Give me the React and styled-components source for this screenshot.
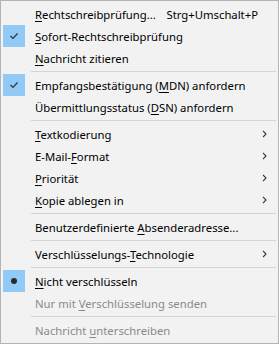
import React from 'react'
import styled, {createGlobalStyle} from 'styled-components'

const GlobalStyle = createGlobalStyle`
    html, body {
        margin: 0;
        padding: 0;
        background: #f2f2f2;
    }
`;

const Menu = styled.div`
    box-sizing: border-box;
    width: 279px;
    height: 344px;
    padding: 2px;
    background: #f2f2f2;
    border: 1px solid #b4b4b4;
    font-family: "Noto Sans", "Liberation Sans", sans-serif;
    font-size: 11.3px;
    color: #000;
    display: flex;
    flex-direction: column;
`;

const Row = styled.div`
    display: flex;
    align-items: center;
    height: 22px;
    color: ${p => p.$disabled ? '#8a8a8a' : '#000'};
    white-space: nowrap;
`;

const IconBox = styled.div`
    width: 22px;
    height: 22px;
    flex: none;
    display: flex;
    align-items: center;
    justify-content: center;
    background: ${p => p.$on ? '#91c9f7' : 'transparent'};
    margin-right: 10px;
`;

const Label = styled.span`
    flex: 1;
    u {
        text-decoration-thickness: 1px;
        text-underline-offset: 2px;
    }
`;

const Shortcut = styled.span`
    padding-right: 18px;
`;

const Arrow = styled.span`
    width: 5px;
    display: flex;
    margin-right: 9px;
`;

const Separator = styled.div`
    height: 5px;
    display: flex;
    align-items: center;
    margin-left: 28px;

    &::after {
        content: '';
        flex: 1;
        height: 1px;
        background: #d4d4d4;
    }
`;

const Dot = styled.span`
    width: 6px;
    height: 6px;
    border-radius: 50%;
    background: #2b2b2b;
`;

const Check = () => (
    <svg width="10" height="8" viewBox="0 0 10 8">
        <path d="M1.5 4 L4 6.5 L8.5 1.5" fill="none" stroke="#333" strokeWidth="1.2"/>
    </svg>
)

const Chevron = () => (
    <svg width="5" height="8" viewBox="0 0 5 8">
        <path d="M1 0.8 L4 4 L1 7.2" fill="none" stroke="#333" strokeWidth="1.1"/>
    </svg>
)

// '&' marks the access key, as in the Windows menu source
const renderLabel = (text) => {
    const i = text.indexOf('&')
    if (i < 0) return text
    return (
        <>
            {text.slice(0, i)}
            <u>{text[i + 1]}</u>
            {text.slice(i + 2)}
        </>
    )
}

const items = [
    {label: '&Rechtschreibprüfung...', shortcut: 'Strg+Umschalt+P'},
    {label: '&Sofort-Rechtschreibprüfung', icon: 'check'},
    {label: '&Nachricht zitieren'},
    'sep',
    {label: 'Empfangsbestätigung (&MDN) anfordern', icon: 'check'},
    {label: 'Übermittlungsstatus (&DSN) anfordern'},
    'sep',
    {label: '&Textkodierung', sub: true},
    {label: 'E-Mail-&Format', sub: true},
    {label: '&Priorität', sub: true},
    {label: '&Kopie ablegen in', sub: true},
    'sep',
    {label: 'Benutzerdefinierte &Absenderadresse...'},
    'sep',
    {label: 'Verschlüsselungs-&Technologie', sub: true},
    'sep',
    {label: '&Nicht verschlüsseln', icon: 'dot'},
    {label: 'Nur mit &Verschlüsselung senden', disabled: true},
    'sep',
    {label: 'Nachricht &unterschreiben', disabled: true},
]

const App = () => {
    return (
        <>
            <GlobalStyle/>
            <Menu>
                {
                    items.map((it, i) => it === 'sep' ? (
                        <Separator key={i}/>
                    ) : (
                        <Row key={i} $disabled={it.disabled}>
                            <IconBox $on={!!it.icon}>
                                {it.icon === 'check' && <Check/>}
                                {it.icon === 'dot' && <Dot/>}
                            </IconBox>
                            <Label>{renderLabel(it.label)}</Label>
                            {it.shortcut && <Shortcut>{it.shortcut}</Shortcut>}
                            {it.sub && <Arrow><Chevron/></Arrow>}
                        </Row>
                    ))
                }
            </Menu>
        </>
    )
}
export default App
